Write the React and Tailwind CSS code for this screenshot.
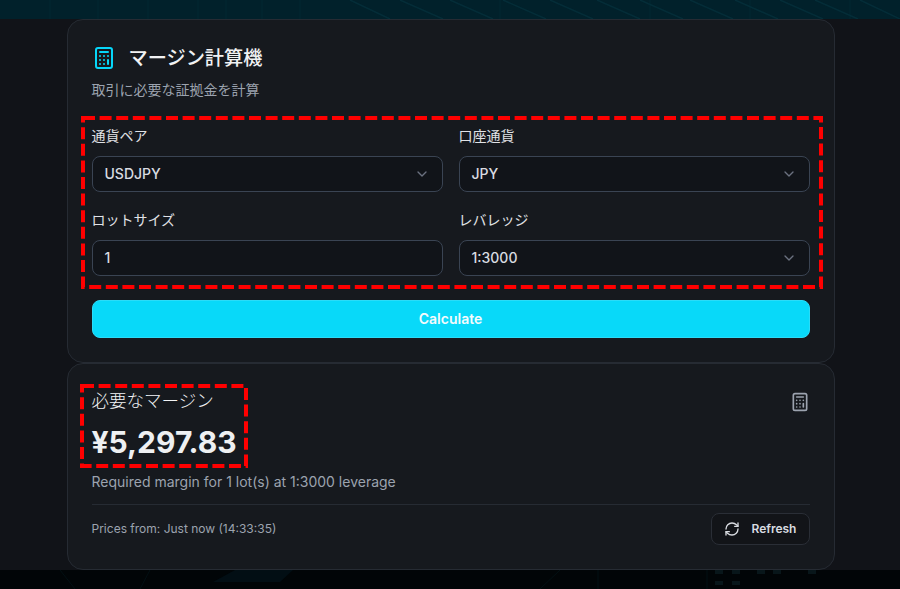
import React from "react";
import { Calculator, ChevronDown, RefreshCw } from "lucide-react";

const font = "font-['Inter','Noto_Sans_CJK_JP',sans-serif]";

const SelectBox = ({ value }) => (
  <div className="flex h-9 items-center justify-between rounded-lg border border-[#3a4453] bg-[#111419] px-3 text-sm font-medium text-[#d9dce1]">
    <span>{value}</span>
    <ChevronDown size={16} className="text-[#6b7280]" />
  </div>
);

const Field = ({ label, children }) => (
  <div>
    <div className="mb-[10px] h-5 text-sm font-normal leading-5 text-[#e0e2e6]">{label}</div>
    {children}
  </div>
);

const DashedBox = ({ className, width, height }) => (
  <svg className={`pointer-events-none absolute ${className}`} width={width} height={height}>
    <rect x="2" y="2" width={width - 4} height={height - 4} fill="none" stroke="#ff0000" strokeWidth="4" strokeDasharray="12 4.6" />
  </svg>
);

const App = () => {
  return (
    <div className={`${font} relative flex h-[589px] w-[900px] flex-col overflow-hidden bg-[#111318]`}>
      <svg className="h-[19px] w-full shrink-0" viewBox="0 0 900 19">
        <rect width="900" height="19" fill="#01212b" />
        <path d="M50 0V19M98 0V19M148 0V19M198 0V19M226 0V19M262 0V19M300 0V19M500 0V19M650 0V19M750 0V19M850 0V19" stroke="#032833" strokeWidth="1" />
        <path d="M350 0L390 19M400 0L443 19M450 0L493 19M503 0L546 19M550 0L593 19M597 0L640 19M640 0L683 19M690 0L733 19M735 0L778 19M780 0L823 19M815 0L858 19M860 0L900 19" stroke="#042d38" strokeWidth="1.5" />
      </svg>

      <div className="ml-[66.5px] w-[768px] grow">
        <div className="h-[344px] rounded-2xl border border-[#262b33] bg-[#16191e] px-6 pt-6">
          <div className="flex h-7 items-center gap-[13px]">
            <Calculator size={24} className="text-[#06d6f9]" />
            <h1 className="text-[19.2px] font-medium text-[#f0f1f3]">マージン計算機</h1>
          </div>
          <p className="mt-2 h-5 text-sm leading-5 text-[#9ca3af]">取引に必要な証拠金を計算</p>

          <div className="mt-[26px] grid grid-cols-2 gap-x-4 gap-y-[18px]">
            <Field label="通貨ペア">
              <SelectBox value="USDJPY" />
            </Field>
            <Field label="口座通貨">
              <SelectBox value="JPY" />
            </Field>
            <Field label="ロットサイズ">
              <div className="flex h-9 items-center rounded-lg border border-[#3a4453] bg-[#111419] px-3 text-sm font-medium text-[#d9dce1]">1</div>
            </Field>
            <Field label="レバレッジ">
              <SelectBox value="1:3000" />
            </Field>
          </div>

          <button className="mt-6 h-[38px] w-full rounded-lg border border-[#2bdcf8] bg-[#08d9f9] text-sm font-semibold text-[#f4fbfd]">Calculate</button>
        </div>

        <div className="h-[207px] rounded-2xl border border-[#262b33] bg-[#16191e] px-6 pt-6">
          <div className="flex items-start justify-between">
            <div>
              <div className="h-[26px] text-[17.5px] font-light leading-[26px] text-[#f3f4f6]">必要なマージン</div>
              <div className="mt-[10px] h-9 text-3xl font-bold leading-9 text-[#eef0f2]">¥5,297.83</div>
              <p className="mt-3 h-5 text-sm leading-5 text-[#9ca3af]">Required margin for 1 lot(s) at 1:3000 leverage</p>
            </div>
            <Calculator size={20} className="mt-1 text-[#9ca3af]" />
          </div>
          <div className="mt-3 flex items-center justify-between border-t border-[#262b33] pt-2">
            <span className="text-xs text-[#9ca3af]">Prices from: Just now (14:33:35)</span>
            <button className="flex h-8 w-[99px] items-center justify-center gap-3 rounded-lg border border-[#2a2e36] bg-[#121418] text-xs font-semibold text-[#d9dce1]">
              <RefreshCw size={16} />
              Refresh
            </button>
          </div>
        </div>
      </div>

      <svg className="h-[19px] w-full shrink-0" viewBox="0 0 900 19">
        <rect width="900" height="19" fill="#010507" />
        <path d="M213 12L235 0H293L280 12Z" fill="#020e14" />
        <path d="M60 0L75 19M150 0L140 19M560 0L540 19M598 0V19M707 0V19" stroke="#031014" strokeWidth="1" fill="none" />
        <path d="M715 2H723M732 2H740M757 2H765M773 2H781M808 2H816M715 13H723M732 13H740" stroke="#08161a" strokeWidth="4" />
      </svg>

      <DashedBox className="left-[81px] top-[116px]" width={742} height={173} />
      <DashedBox className="left-[80px] top-[384px]" width={168} height={84} />
    </div>
  );
};

export default App;
